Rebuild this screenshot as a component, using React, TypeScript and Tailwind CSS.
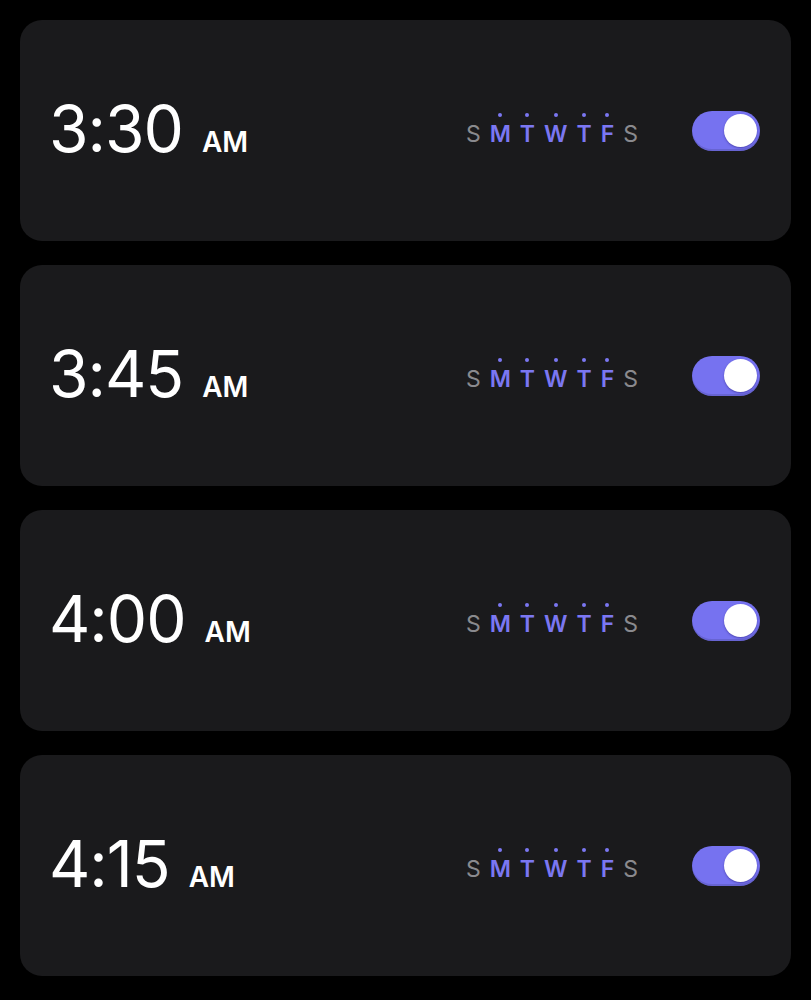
import * as React from 'react'

const alarms = [
  { time: '3:30', period: 'AM' },
  { time: '3:45', period: 'AM' },
  { time: '4:00', period: 'AM' },
  { time: '4:15', period: 'AM' },
]

const days = [
  { label: 'S', on: false },
  { label: 'M', on: true },
  { label: 'T', on: true },
  { label: 'W', on: true },
  { label: 'T', on: true },
  { label: 'F', on: true },
  { label: 'S', on: false },
]

function Toggle() {
  return (
    <div className="flex h-[40px] w-[68px] items-center justify-end rounded-full bg-[#7672f0] pr-[3px] shadow-[inset_0_-2px_0_rgba(0,0,0,0.12)]">
      <div className="h-[33px] w-[33px] rounded-full bg-white shadow-[0_1px_2px_rgba(40,30,120,0.5)]" />
    </div>
  )
}

function Days() {
  return (
    <div className="flex items-end gap-[9px]">
      {days.map((d, i) => (
        <div key={i} className="flex flex-col items-center">
          <div className={`mb-[6px] h-[4px] w-[4px] rounded-full ${d.on ? 'bg-[#7b77f2]' : 'bg-transparent'}`} />
          <span
            className={`text-[23px] leading-none ${
              d.on ? 'font-semibold text-[#7b77f2]' : 'font-normal text-[#8a8a8e]'
            }`}
          >
            {d.label}
          </span>
        </div>
      ))}
    </div>
  )
}

export default function App() {
  return (
    <div className="min-h-screen bg-black p-[20px] font-['Inter',sans-serif]">
      <div className="flex flex-col gap-[24px]">
        {alarms.map((a) => (
          <div
            key={a.time}
            className="flex h-[221px] items-center justify-between rounded-[22px] bg-[#1a1a1c] pl-[29px] pr-[31px]"
          >
            <div className="flex items-baseline pb-[4px] text-white">
              <span className="text-[64px] font-normal leading-none tracking-[-1px]">{a.time}</span>
              <span className="ml-[19px] text-[28px] font-semibold leading-none">{a.period}</span>
            </div>
            <div className="flex items-center gap-[54px]">
              <div className="pb-[3px]">
                <Days />
              </div>
              <Toggle />
            </div>
          </div>
        ))}
      </div>
    </div>
  )
}
